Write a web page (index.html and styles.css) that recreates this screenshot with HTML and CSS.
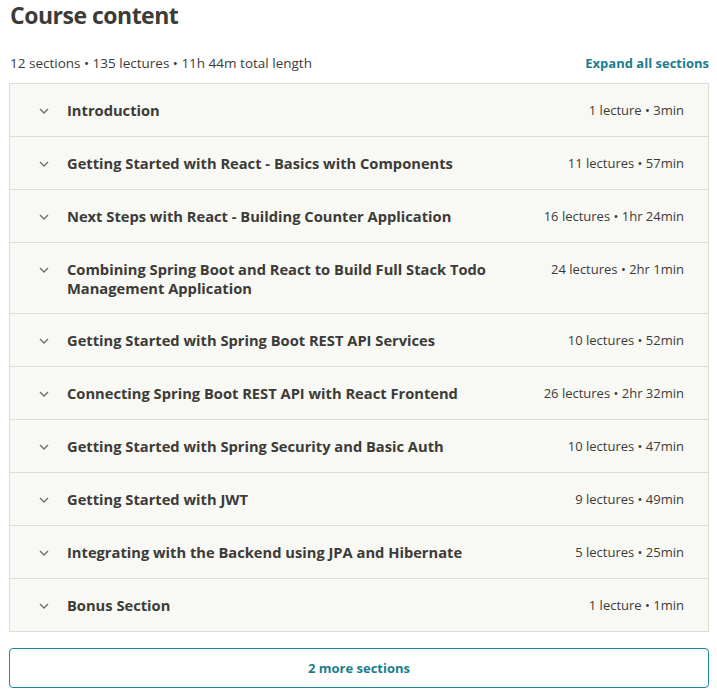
FILE: index.html
```html
<!DOCTYPE html>
<html>
<head>
<meta charset="utf-8">
<link rel="stylesheet" href="styles.css">
</head>
<body>
<div class="page">
  <h2 class="title">Course content</h2>
  <div class="summary">
    <span class="stats">12 sections • 135 lectures • 11h 44m total length</span>
    <button class="expand">Expand all sections</button>
  </div>
  <div class="panel">
    <div class="row"><span class="chev"><svg width="10" height="6" viewBox="0 0 10 6"><path d="M1 1l4 4 4-4" fill="none" stroke="#6a6f73" stroke-width="1.4"/></svg></span><span class="name">Introduction</span><span class="meta">1 lecture • 3min</span></div>
    <div class="row"><span class="chev"><svg width="10" height="6" viewBox="0 0 10 6"><path d="M1 1l4 4 4-4" fill="none" stroke="#6a6f73" stroke-width="1.4"/></svg></span><span class="name">Getting Started with React - Basics with Components</span><span class="meta">11 lectures • 57min</span></div>
    <div class="row"><span class="chev"><svg width="10" height="6" viewBox="0 0 10 6"><path d="M1 1l4 4 4-4" fill="none" stroke="#6a6f73" stroke-width="1.4"/></svg></span><span class="name">Next Steps with React - Building Counter Application</span><span class="meta">16 lectures • 1hr 24min</span></div>
    <div class="row two"><span class="chev"><svg width="10" height="6" viewBox="0 0 10 6"><path d="M1 1l4 4 4-4" fill="none" stroke="#6a6f73" stroke-width="1.4"/></svg></span><span class="name">Combining Spring Boot and React to Build Full Stack Todo Management Application</span><span class="meta">24 lectures • 2hr 1min</span></div>
    <div class="row"><span class="chev"><svg width="10" height="6" viewBox="0 0 10 6"><path d="M1 1l4 4 4-4" fill="none" stroke="#6a6f73" stroke-width="1.4"/></svg></span><span class="name">Getting Started with Spring Boot REST API Services</span><span class="meta">10 lectures • 52min</span></div>
    <div class="row"><span class="chev"><svg width="10" height="6" viewBox="0 0 10 6"><path d="M1 1l4 4 4-4" fill="none" stroke="#6a6f73" stroke-width="1.4"/></svg></span><span class="name">Connecting Spring Boot REST API with React Frontend</span><span class="meta">26 lectures • 2hr 32min</span></div>
    <div class="row"><span class="chev"><svg width="10" height="6" viewBox="0 0 10 6"><path d="M1 1l4 4 4-4" fill="none" stroke="#6a6f73" stroke-width="1.4"/></svg></span><span class="name">Getting Started with Spring Security and Basic Auth</span><span class="meta">10 lectures • 47min</span></div>
    <div class="row"><span class="chev"><svg width="10" height="6" viewBox="0 0 10 6"><path d="M1 1l4 4 4-4" fill="none" stroke="#6a6f73" stroke-width="1.4"/></svg></span><span class="name">Getting Started with JWT</span><span class="meta">9 lectures • 49min</span></div>
    <div class="row"><span class="chev"><svg width="10" height="6" viewBox="0 0 10 6"><path d="M1 1l4 4 4-4" fill="none" stroke="#6a6f73" stroke-width="1.4"/></svg></span><span class="name">Integrating with the Backend using JPA and Hibernate</span><span class="meta">5 lectures • 25min</span></div>
    <div class="row"><span class="chev"><svg width="10" height="6" viewBox="0 0 10 6"><path d="M1 1l4 4 4-4" fill="none" stroke="#6a6f73" stroke-width="1.4"/></svg></span><span class="name">Bonus Section</span><span class="meta">1 lecture • 1min</span></div>
  </div>
  <button class="more">2 more sections</button>
</div>
</body>
</html>
```
FILE: styles.css
```css
html, body { margin: 0; padding: 0; background: #fff; }
body { font-family: "Open Sans", "Noto Sans", sans-serif; color: #3c3b37; }
.page { padding: 0 8px 0 9px; }
.title { margin: 0; font-size: 23px; line-height: 31px; font-weight: 700; color: #3c3b37; letter-spacing: -0.5px; padding-left: 1px; }
.summary { display: flex; justify-content: space-between; align-items: center; margin-top: 19px; height: 26px; padding-left: 1px; }
.stats { font-size: 13.5px; color: #3c3b37; }
.expand { border: 0; background: none; padding: 0; font-family: inherit; font-size: 13px; font-weight: 700; color: #1b7d8c; }
.panel { margin-top: 7px; border: 1px solid #dcdcd2; background: #f8f8f5; }
.row { display: flex; align-items: flex-start; padding: 17px 24px 16px 29px; border-top: 1px solid #dcdcd2; }
.row:first-child { border-top: 0; }
.row.two { padding-bottom: 15px; }
.chev { width: 10px; height: 6px; display: flex; margin-right: 18px; margin-top: 7px; flex: none; }
.chev svg { display: block; }
.name { flex: 1; font-size: 14.7px; font-weight: 700; line-height: 19px; color: #3c3b37; padding-right: 40px; }
.meta { font-size: 13px; color: #3c3b37; white-space: nowrap; line-height: 19px; }
.more { display: block; width: 100%; margin-top: 16px; height: 40px; border: 1px solid #1b8a9c; border-radius: 4px; background: #fff; font-family: inherit; font-size: 13px; font-weight: 700; color: #1b7d8c; }
```
